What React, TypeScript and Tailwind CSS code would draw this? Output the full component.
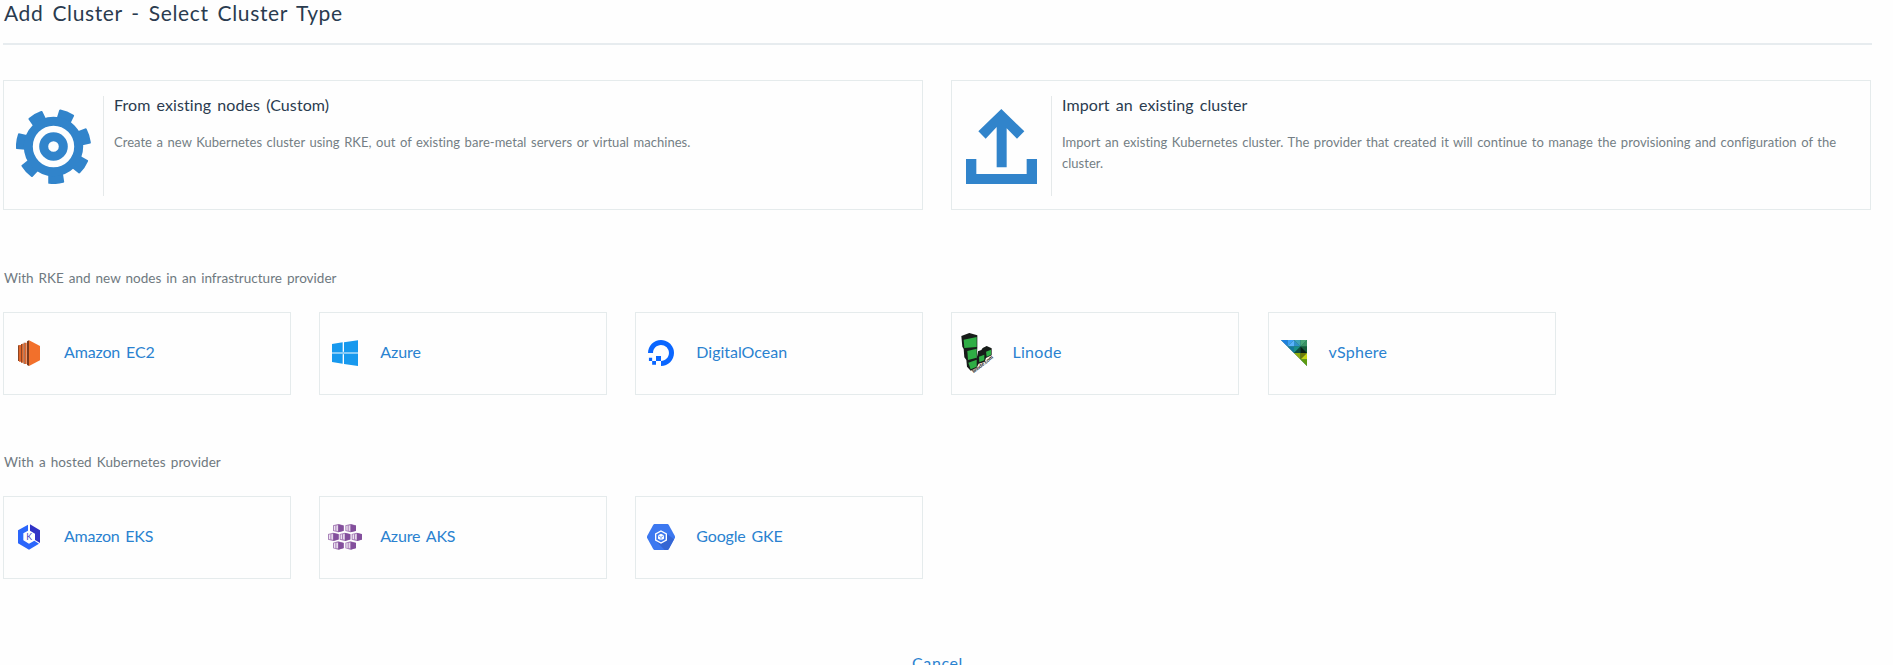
import type { ReactNode } from "react";

const GearIcon = () => (
  <svg className="h-[75px] w-[75px]" viewBox="-37.5 -37.5 75 75" fill="#3184cb">
    {[0, 1, 2, 3, 4, 5, 6].map((i) => (
      <path
        key={i}
        d="M-7.3 -27 L-8 -36.2 Q-7.8 -36.8 -7 -36.9 A37.5 37.5 0 0 1 7 -36.9 Q7.8 -36.8 8 -36.2 L7.3 -27 Z"
        transform={`rotate(${21.4 + (i * 360) / 7})`}
      />
    ))}
    <circle r="25.2" fill="none" stroke="#3184cb" strokeWidth="9" />
    <circle r="9.8" fill="none" stroke="#3184cb" strokeWidth="9" />
  </svg>
);

const UploadIcon = () => (
  <svg className="h-[75px] w-[71px]" viewBox="198 117 213 225" fill="#3184cb">
    <path d="M304 117 L373 184 L351 206 L320 175 V292 H290 V171 L257 206 L235 184 Z" />
    <path d="M198 267 H229 V312 H380 V267 H411 V342 H198 Z" />
  </svg>
);

const Ec2Icon = () => (
  <svg className="h-[26px] w-[22px]" viewBox="54 239 66 78">
    <path d="M87 240 L120 257 V300 L87 317 Z" fill="#f2702b" />
    <path d="M81 243 L87 240 V317 L81 314 Z" fill="#7d3a1c" />
    <path d="M74 247 H80 V311 H74 Z M66 250 H71 V307 H66 Z M57 254 H63 V304 H57 Z" fill="#e0662a" />
    <path d="M71 247 H74 V311 H71 Z M63 251 H66 V307 H63 Z M54 255 H57 V302 H54 Z" fill="#8c4524" />
  </svg>
);

const WindowsIcon = () => (
  <svg className="h-[26px] w-[26px]" viewBox="66 120 78 78">
    <path d="M66 155 H144 V163 H66 Z" fill="#86cbf7" />
    <path
      d="M66 132 L98 127 V156 H66 Z M102 127 L144 121 V156 H102 Z M66 162 H98 V191 L66 186 Z M102 162 H144 V198 L102 192 Z"
      fill="#1799ee"
    />
  </svg>
);

const DigitalOceanIcon = () => (
  <svg className="h-[26px] w-[26px]" viewBox="0 0 24 24" fill="#0a66ff">
    <path d="M12.04 0C5.408-.02.005 5.37.005 11.992h4.638c0-4.923 4.882-8.731 10.064-6.855a6.95 6.95 0 014.147 4.148c1.889 5.177-1.924 10.055-6.84 10.064v-4.61H7.391v4.623h4.61V24c7.86 0 13.967-7.588 11.397-15.83-1.115-3.59-3.985-6.446-7.575-7.575A12.8 12.8 0 0012.039 0zM7.39 19.362H3.828v3.564H7.39zm-3.563 0v-2.978H.85v2.978z" />
  </svg>
);

const LinodeIcon = () => (
  <svg className="h-10 w-[33px]" viewBox="61 83 99 120">
    <g fill="#171c19">
      <path d="M62 92 L86 83 L110 90 V127 L108 160 L112 138 L122 134 L126 128 L138 122 L153 129 V150 L136 158 L132 170 L114 175 L108 187 L90 196 L79 184 L77 164 L71 156 L69 131 L65 124 Z" />
    </g>
    <g fill="#2fae45">
      <path d="M69 103 L108 95 V125 L71 128 Z" />
      <path d="M80 137 L108 130 V157 L82 164 Z" />
      <path d="M83 172 L108 163 V184 L90 192 Z" />
      <path d="M115 154 L131 148 V165 L116 171 Z" />
      <path d="M136 139 L151 133 V148 L138 154 Z" />
    </g>
    <text
      x="99"
      y="204"
      transform="rotate(-38 99 204)"
      fontFamily="Liberation Sans"
      fontWeight="700"
      fontSize="15"
      fill="#111"
      textLength="76"
    >
      linode.com
    </text>
  </svg>
);

const VsphereIcon = () => (
  <svg className="h-[26px] w-[26px]" viewBox="0 0 80 80">
    <path d="M0 0 H80 V80 Z" fill="#12604f" />
    <path d="M0 0 H20 V20 Z" fill="#1c7fe0" />
    <path d="M20 0 H40 L20 20 Z" fill="#3d9ff5" />
    <path d="M40 0 V20 H20 Z" fill="#5ab2fb" />
    <path d="M40 0 L60 20 H40 Z" fill="#2f8fc9" />
    <path d="M40 0 H60 V20 Z" fill="#3fa3b8" />
    <path d="M60 0 H80 L60 20 Z" fill="#4aa779" />
    <path d="M80 0 V20 H60 Z" fill="#3b9364" />
    <path d="M20 20 H40 V40 Z" fill="#12799b" />
    <path d="M40 20 H60 L40 40 Z" fill="#1a8f86" />
    <path d="M60 20 V40 H40 Z" fill="#0e4d3f" />
    <path d="M60 20 H80 V40 Z" fill="#155c38" />
    <path d="M60 20 L80 40 H60 Z" fill="#071e16" />
    <path d="M40 40 H60 V60 Z" fill="#8cab10" />
    <path d="M60 40 H80 L60 60 Z" fill="#6d7a0a" />
    <path d="M80 40 V60 H60 Z" fill="#c3d313" />
    <path d="M60 60 H80 V80 Z" fill="#5d9b10" />
  </svg>
);

const EksIcon = () => (
  <svg className="h-[26px] w-[22px]" viewBox="54 222 66 78">
    <path d="M84 224 V242 L70 250 V271 L87 281 L103 272 L117 281 L87 299 L54 280 V241 Z" fill="#2b66fb" />
    <path d="M90 223 L120 241 V279 L105 270 V251 L90 242 Z" fill="#3033c6" />
    <text x="79" y="270" fontFamily="Lato" fontSize="26" fill="#3e40c4">
      K
    </text>
  </svg>
);

const AKS_NODES = [
  [69, 102],
  [106, 102],
  [54, 128],
  [89, 128],
  [125, 128],
  [69, 154],
  [106, 154],
];

const AksIcon = () => (
  <svg className="h-[26px] w-[34px]" viewBox="54 102 102 78">
    {AKS_NODES.map(([x, y]) => (
      <g key={`${x}-${y}`} transform={`translate(${x} ${y})`}>
        <path d="M0 4 L15 0 L32 4 V21 L15 25 L0 21 Z" fill="#a983b9" />
        <path d="M3 6 L7 5 V20 L3 19 Z" fill="#eee3f2" />
        <path d="M10 5 L15 4 V21 L10 20 Z" fill="#e6d8eb" />
        <path d="M16 1 L32 5 V20 L16 25 Z" fill="#834f9c" />
      </g>
    ))}
  </svg>
);

const GkeIcon = () => (
  <svg className="h-[26px] w-7" viewBox="51 102 84 78">
    <path d="M73 102 H113 L116 104 L135 139 V143 L116 178 L113 180 H73 L70 178 L51 143 V139 L70 104 Z" fill="#3c78f0" />
    <path d="M108 130 L132 148 L116 178 L113 180 H104 L79 154 L93 160 L108 151 Z" fill="#3566d3" />
    <path d="M93 123 L109 132 V150 L93 159 L77 150 V132 Z" fill="none" stroke="#fff" strokeWidth="4" />
    <path d="M93 131 L102 136 V146 L93 151 L84 146 V136 Z" fill="#fff" />
    <path d="M85 137 L93 142 L101 137 M93 142 V151" fill="none" stroke="#3c78f0" strokeWidth="2" />
  </svg>
);

type ClusterOption = { title: string; description: string; icon: ReactNode };

const OPTIONS: ClusterOption[] = [
  {
    title: "From existing nodes (Custom)",
    description: "Create a new Kubernetes cluster using RKE, out of existing bare-metal servers or virtual machines.",
    icon: <GearIcon />,
  },
  {
    title: "Import an existing cluster",
    description:
      "Import an existing Kubernetes cluster. The provider that created it will continue to manage the provisioning and configuration of the cluster.",
    icon: <UploadIcon />,
  },
];

type Provider = { name: string; icon: ReactNode; spacing: string };

const INFRASTRUCTURE: Provider[] = [
  { name: "Amazon EC2", icon: <Ec2Icon />, spacing: "tracking-[-0.15px] [word-spacing:2px]" },
  { name: "Azure", icon: <WindowsIcon />, spacing: "" },
  { name: "DigitalOcean", icon: <DigitalOceanIcon />, spacing: "" },
  { name: "Linode", icon: <LinodeIcon />, spacing: "tracking-[0.3px]" },
  { name: "vSphere", icon: <VsphereIcon />, spacing: "tracking-[0.25px]" },
];

const HOSTED: Provider[] = [
  { name: "Amazon EKS", icon: <EksIcon />, spacing: "tracking-[-0.25px] [word-spacing:2px]" },
  { name: "Azure AKS", icon: <AksIcon />, spacing: "tracking-[-0.15px] [word-spacing:2px]" },
  { name: "Google GKE", icon: <GkeIcon />, spacing: "tracking-[-0.15px] [word-spacing:2px]" },
];

function OptionCard({ title, description, icon }: ClusterOption) {
  return (
    <button className="flex h-[130px] w-[920px] items-start border border-[#e5ebec] pt-[14px] text-left">
      <span className="mt-px flex h-[100px] w-[100px] shrink-0 items-center justify-center border-r border-[#e5e9ea]">
        {icon}
      </span>
      <span className="flex flex-1 flex-col pr-5 pl-2.5">
        <span className="text-[16px] leading-5 tracking-[0.08px] text-[#2a3b4f] [word-spacing:2px]">{title}</span>
        <span className="mt-[17px] text-[13px] leading-[21px] tracking-[0.025px] text-[#747e85] [word-spacing:1.2px]">
          {description}
        </span>
      </span>
    </button>
  );
}

type GroupProps = { label: string; labelSpacing: string; providers: Provider[]; className: string };

function ProviderGroup({ label, labelSpacing, providers, className }: GroupProps) {
  return (
    <section className={className}>
      <h2 className={`pl-px text-[13.5px] leading-5 text-[#6f7980] [word-spacing:1.5px] ${labelSpacing}`}>{label}</h2>
      <div className="mt-6 flex gap-[28.15px]">
        {providers.map(({ name, icon, spacing }) => (
          <button key={name} className="flex h-[83px] w-72 items-center border border-[#e5ebec] text-[#2a82d0]">
            <span className="flex w-[50px] shrink-0 justify-center pb-px">{icon}</span>
            <span className={`ml-2.5 pb-[3px] text-[16px] leading-5 ${spacing}`}>{name}</span>
          </button>
        ))}
      </div>
    </section>
  );
}

export default function App() {
  return (
    <main className="h-screen overflow-hidden bg-[#fefefe] pl-[3px] font-['Lato',sans-serif] [font-variant-ligatures:none]">
      <header className="h-[45px] w-[1869px] border-b-2 border-[#e7ecef]">
        <h1 className="pl-px text-[21px] leading-[25px] tracking-[0.63px] text-[#2a3b4f] [word-spacing:3px]">
          Add Cluster - Select Cluster Type
        </h1>
      </header>
      <div className="mt-[35px] flex gap-7">
        {OPTIONS.map((option) => (
          <OptionCard key={option.title} {...option} />
        ))}
      </div>
      <ProviderGroup
        className="mt-[58px]"
        label="With RKE and new nodes in an infrastructure provider"
        labelSpacing="tracking-[0.01px]"
        providers={INFRASTRUCTURE}
      />
      <ProviderGroup
        className="mt-[57px]"
        label="With a hosted Kubernetes provider"
        labelSpacing="tracking-[0.08px]"
        providers={HOSTED}
      />
      <footer className="mt-[74px] flex w-[1869px] justify-center">
        <button className="text-[16px] leading-5 tracking-[0.6px] text-[#2a82d0]">Cancel</button>
      </footer>
    </main>
  );
}
